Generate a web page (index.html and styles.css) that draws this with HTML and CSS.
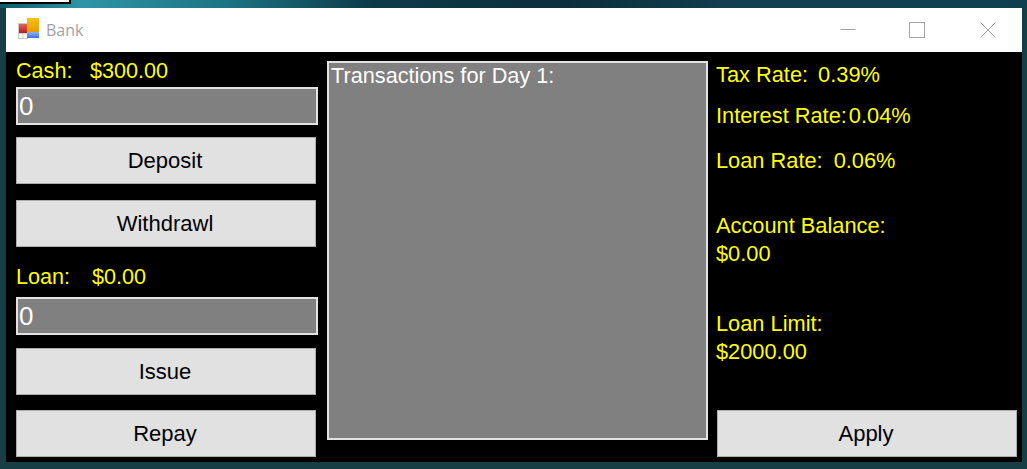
FILE: index.html
```html
<!DOCTYPE html>
<html lang="en">
<head>
<meta charset="utf-8">
<title>Bank</title>
<link rel="stylesheet" href="styles.css">
</head>
<body>
<div class="desktop">
  <div class="corner"></div>
  <main class="window">
    <header class="titlebar">
      <svg class="app-icon" width="21" height="21" viewBox="0 0 21 21">
        <defs>
          <linearGradient id="or" x1="0" y1="0" x2="0" y2="1"><stop offset="0" stop-color="#f5c21a"/><stop offset="1" stop-color="#e89a00"/></linearGradient>
          <linearGradient id="bl" x1="0" y1="0" x2="0" y2="1"><stop offset="0" stop-color="#8fb2f2"/><stop offset="1" stop-color="#3f6fd8"/></linearGradient>
          <linearGradient id="rd" x1="0" y1="0" x2="0" y2="1"><stop offset="0" stop-color="#e8605a"/><stop offset="1" stop-color="#b81f1f"/></linearGradient>
        </defs>
        <rect x="0.5" y="5.5" width="9" height="15" fill="#fff" stroke="#c8c8c8"/>
        <path d="M5 15v5M1 15.5h8" stroke="#cfcfcf"/>
        <rect x="1" y="6" width="8" height="9" fill="url(#rd)"/>
        <rect x="9" y="0" width="12" height="14" fill="url(#or)"/>
        <rect x="9" y="14" width="12" height="6" fill="url(#bl)"/>
      </svg>
      <span class="title">Bank</span>
      <div class="controls">
        <svg class="ctl ctl-min" width="16" height="16" viewBox="0 0 16 16"><path d="M0.5 7.5h15" stroke="#a3a3a3"/></svg>
        <svg class="ctl ctl-max" width="16" height="16" viewBox="0 0 16 16"><rect x="0.5" y="0.5" width="15" height="15" fill="none" stroke="#a3a3a3"/></svg>
        <svg class="ctl" width="16" height="16" viewBox="0 0 16 16"><path d="M0.5 0.5l15 15M15.5 0.5l-15 15" stroke="#a3a3a3"/></svg>
      </div>
    </header>
    <div class="content">
      <section class="col-left">
        <div class="money cash"><span class="m-label">Cash:</span><span>$300.00</span></div>
        <div class="field">0</div>
        <button class="btn b-deposit">Deposit</button>
        <button class="btn b-withdraw">Withdrawl</button>
        <div class="money loan"><span class="m-label-loan">Loan:</span><span>$0.00</span></div>
        <div class="field">0</div>
        <button class="btn b-issue">Issue</button>
        <button class="btn b-repay">Repay</button>
      </section>
      <section class="list">Transactions for Day 1:</section>
      <section class="col-right">
        <div class="rate r-tax"><span>Tax Rate:</span><span>0.39%</span></div>
        <div class="rate r-int"><span>Interest Rate:</span><span>0.04%</span></div>
        <div class="rate r-loan"><span>Loan Rate:</span><span>0.06%</span></div>
        <div class="stack s-bal"><div>Account Balance:</div><div>$0.00</div></div>
        <div class="stack s-lim"><div>Loan Limit:</div><div>$2000.00</div></div>
        <button class="btn b-apply">Apply</button>
      </section>
    </div>
  </main>
</div>
</body>
</html>
```

FILE: styles.css
```css
* { box-sizing: border-box; }
html, body { margin: 0; padding: 0; }
body { width: 1027px; height: 469px; overflow: hidden; font-family: "Liberation Sans", Arial, sans-serif; }
.desktop {
  position: relative;
  width: 1027px;
  height: 469px;
  padding: 8px 5px 7px 6px;
  background:
    linear-gradient(90deg, #0f5a66 0%, #2f95a6 8%, #1c7484 22%, #0d3b4a 36%, #0b2f3d 55%, #123f50 72%, #0f3f4f 100%) top / 100% 8px no-repeat,
    #173d45;
}
.corner {
  position: absolute;
  left: 0;
  top: 0;
  width: 71px;
  height: 4px;
  background: #fff;
  border: solid #000;
  border-width: 0 2px 2px 0;
}
.window { width: 1016px; height: 454px; background: #000; display: flex; flex-direction: column; }
.titlebar { height: 44px; background: #fff; display: flex; align-items: center; padding: 0 0 0 12px; flex: none; }
.app-icon { flex: none; margin-top: -3px; }
.title { color: #a2a2a6; font-family: "Open Sans", sans-serif; font-size: 16px; margin-left: 7px; }
.controls { margin-left: auto; display: flex; padding-right: 26px; margin-top: -1px; }
.ctl { display: block; }
.ctl-min { margin-right: 53px; }
.ctl-max { margin-right: 55px; }
.content { display: flex; padding: 9px 0 0 10px; }
.col-left { width: 302px; color: #ff0; font-size: 21.6px; flex: none; }
.money { display: flex; height: 26px; line-height: 19px; align-items: flex-start; }
.m-label { width: 74px; }
.m-label-loan { width: 76px; }
.field {
  width: 302px;
  height: 38px;
  background: #808080;
  border: 2px solid #e2e2e2;
  color: #fff;
  font-size: 26px;
  line-height: 34px;
  padding-left: 1px;
}
.btn {
  display: block;
  width: 300px;
  height: 47px;
  background: #e1e1e1;
  border: 1px solid #adadad;
  color: #000;
  font-family: "Liberation Sans", Arial, sans-serif;
  font-size: 22px;
  padding: 0 2px 0 0;
}
.b-deposit { margin-top: 12px; }
.b-withdraw { margin-top: 16px; }
.loan { margin-top: 18px; height: 32px; line-height: 23px; }
.b-issue { margin-top: 13px; }
.b-repay { margin-top: 15px; }
.list {
  width: 381px;
  height: 379px;
  margin-left: 9px;
  flex: none;
  background: #808080;
  border: 2px solid #e2e2e2;
  color: #fff;
  font-size: 21.7px;
  line-height: 24px;
  padding: 1px 0 0 2px;
}
.col-right { margin-left: 8px; width: 301px; height: 396px; flex: none; color: #ff0; font-size: 21.8px; line-height: 24px; display: flex; flex-direction: column; }
.rate { display: flex; gap: 10px; }
.r-tax { margin-top: 2px; }
.r-int { margin-top: 17px; gap: 2px; }
.r-loan { margin-top: 21px; gap: 11px; }
.stack > div { height: 28px; }
.s-bal { margin-top: 41px; }
.s-lim { margin-top: 42px; }
.b-apply { margin-top: auto; margin-left: 1px; }
```
